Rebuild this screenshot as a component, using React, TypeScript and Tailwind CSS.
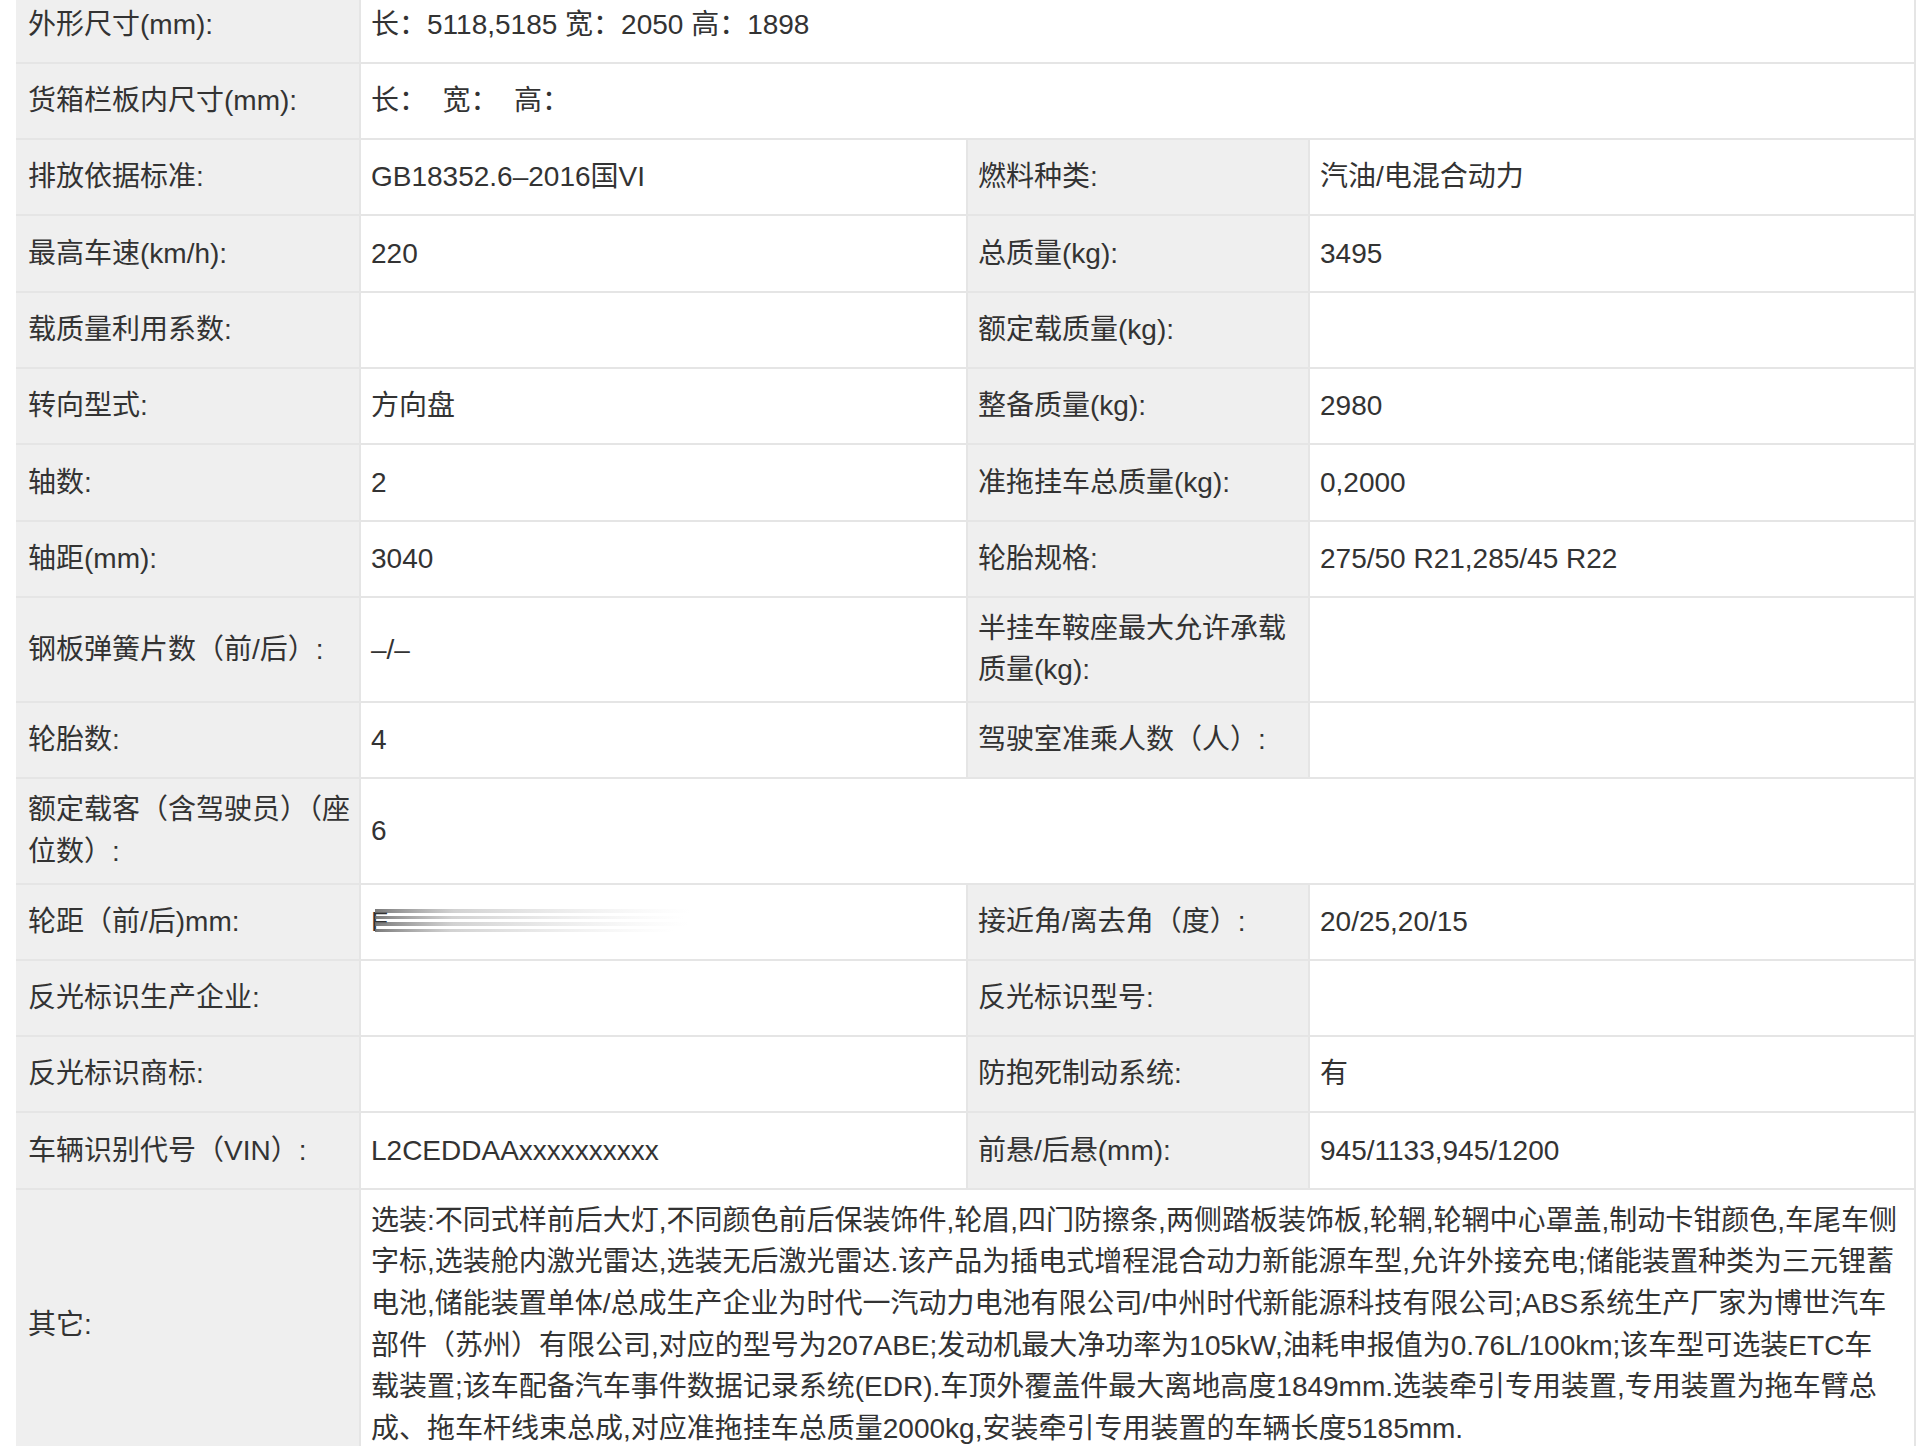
import React from 'react';

type Row = {
  label: string;
  value?: React.ReactNode;
  label2?: string;
  value2?: React.ReactNode;
  wide?: boolean;
};

const otherLines = [
  '选装:不同式样前后大灯,不同颜色前后保装饰件,轮眉,四门防擦条,两侧踏板装饰板,轮辋,轮辋中心罩盖,制动卡钳颜色,车尾车侧',
  '字标,选装舱内激光雷达,选装无后激光雷达.该产品为插电式增程混合动力新能源车型,允许外接充电;储能装置种类为三元锂蓄',
  '电池,储能装置单体/总成生产企业为时代一汽动力电池有限公司/中州时代新能源科技有限公司;ABS系统生产厂家为博世汽车',
  '部件（苏州）有限公司,对应的型号为207ABE;发动机最大净功率为105kW,油耗申报值为0.76L/100km;该车型可选装ETC车',
  '载装置;该车配备汽车事件数据记录系统(EDR).车顶外覆盖件最大离地高度1849mm.选装牵引专用装置,专用装置为拖车臂总',
  '成、拖车杆线束总成,对应准拖挂车总质量2000kg,安装牵引专用装置的车辆长度5185mm.',
];

// redacted track width: a leftover glyph plus smeared streaks
function Smudge() {
  return (
    <div className="relative h-[42px] w-[340px]">
      <span className="absolute left-0 top-0 leading-[42px]">F</span>
      <svg className="absolute left-[4px] top-[6px]" width="320" height="30" viewBox="0 0 320 30">
        <defs>
          <linearGradient id="smear" x1="0" x2="1" y1="0" y2="0">
            <stop offset="0" stopColor="#6b6b6b" stopOpacity="0.9" />
            <stop offset="0.25" stopColor="#9a9a9a" stopOpacity="0.45" />
            <stop offset="1" stopColor="#cfcfcf" stopOpacity="0" />
          </linearGradient>
        </defs>
        <rect x="0" y="2" width="316" height="4" fill="url(#smear)" />
        <rect x="0" y="9" width="310" height="3" fill="url(#smear)" />
        <rect x="0" y="15" width="314" height="4" fill="url(#smear)" />
        <rect x="0" y="22" width="300" height="3" fill="url(#smear)" />
      </svg>
    </div>
  );
}

const rows: Row[] = [
  { label: '外形尺寸(mm):', value: '长：5118,5185 宽：2050 高：1898', wide: true },
  { label: '货箱栏板内尺寸(mm):', value: '长：  宽：  高：', wide: true },
  { label: '排放依据标准:', value: 'GB18352.6–2016国VI', label2: '燃料种类:', value2: '汽油/电混合动力' },
  { label: '最高车速(km/h):', value: '220', label2: '总质量(kg):', value2: '3495' },
  { label: '载质量利用系数:', value: '', label2: '额定载质量(kg):', value2: '' },
  { label: '转向型式:', value: '方向盘', label2: '整备质量(kg):', value2: '2980' },
  { label: '轴数:', value: '2', label2: '准拖挂车总质量(kg):', value2: '0,2000' },
  { label: '轴距(mm):', value: '3040', label2: '轮胎规格:', value2: '275/50 R21,285/45 R22' },
  { label: '钢板弹簧片数（前/后）:', value: '–/–', label2: '半挂车鞍座最大允许承载质量(kg):', value2: '' },
  { label: '轮胎数:', value: '4', label2: '驾驶室准乘人数（人）:', value2: '' },
  { label: '额定载客（含驾驶员）（座位数）:', value: '6', wide: true },
  { label: '轮距（前/后)mm:', value: <Smudge />, label2: '接近角/离去角（度）:', value2: '20/25,20/15' },
  { label: '反光标识生产企业:', value: '', label2: '反光标识型号:', value2: '' },
  { label: '反光标识商标:', value: '', label2: '防抱死制动系统:', value2: '有' },
  { label: '车辆识别代号（VIN）:', value: 'L2CEDDAAxxxxxxxxxx', label2: '前悬/后悬(mm):', value2: '945/1133,945/1200' },
  {
    label: '其它:',
    wide: true,
    value: (
      <div>
        {otherLines.map((line, i) => (
          <div key={i} className="whitespace-nowrap">
            {line}
          </div>
        ))}
      </div>
    ),
  },
];

const labelCell = 'flex min-h-[74.3px] items-center bg-[#efefef] py-[10px]';
const valueCell = 'flex min-h-[74.3px] items-center bg-white py-[10px] pl-[10px] pr-[10px] whitespace-pre-wrap';

export default function App() {
  return (
    <div className="h-[1446px] overflow-hidden bg-white font-['Liberation_Sans','Noto_Sans_CJK_SC',sans-serif] text-[28px] leading-[41.6px] text-[#333333]">
      <div className="ml-[16px] mt-[-12.5px] grid w-[1900px] grid-cols-[343px_605px_340px_604px] gap-x-[2px] gap-y-[2px] border-r-2 border-[#e5e5e5] bg-[#e5e5e5]">
        {rows.map((r, i) => (
          <React.Fragment key={i}>
            <div className={`${labelCell} pl-[12px] pr-[8px]`}>{r.label}</div>
            {r.wide ? (
              <div className={`${valueCell} col-span-3`}>{r.value}</div>
            ) : (
              <>
                <div className={valueCell}>{r.value}</div>
                <div className={`${labelCell} pl-[10px] pr-[8px]`}>{r.label2}</div>
                <div className={valueCell}>{r.value2}</div>
              </>
            )}
          </React.Fragment>
        ))}
      </div>
    </div>
  );
}
